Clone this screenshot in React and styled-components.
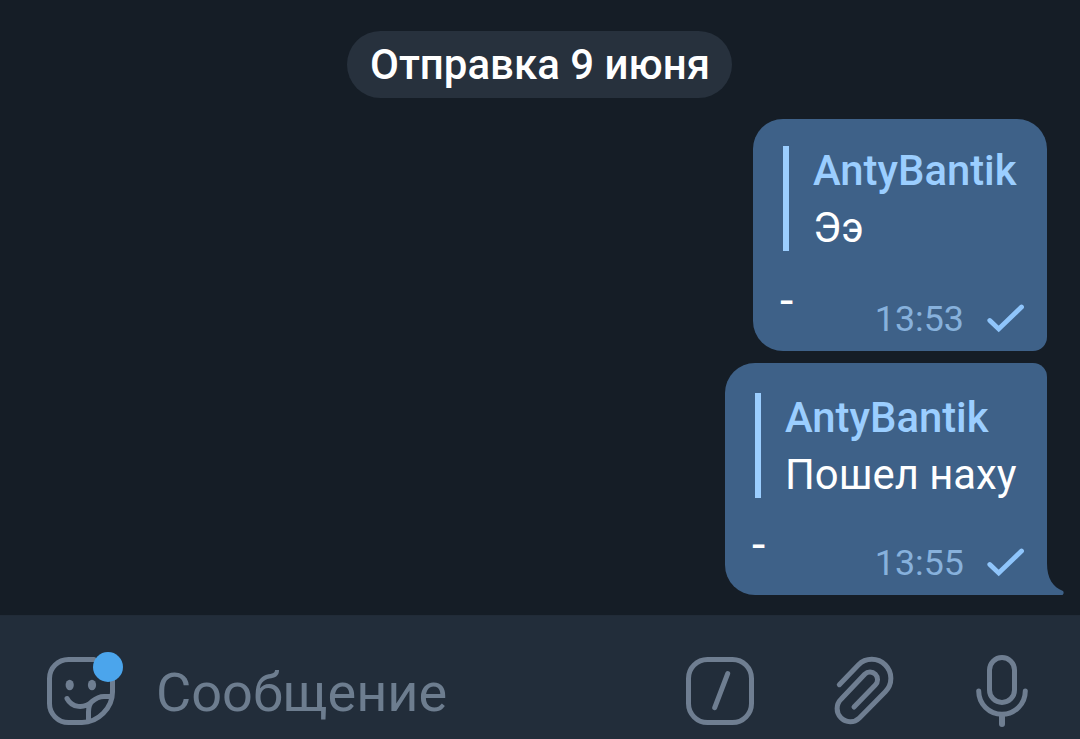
import React from 'react';
import styled, { createGlobalStyle } from 'styled-components';

const GlobalStyle = createGlobalStyle`
  * {
    box-sizing: border-box;
  }

  body {
    margin: 0;
    background: #151d26;
    font-family: Roboto, "Noto Sans", sans-serif;
  }
`

const Screen = styled.div`
  display: flex;
  flex-direction: column;
  width: 1080px;
  height: 739px;
  overflow: hidden;
`

const Chat = styled.main`
  display: flex;
  flex-direction: column;
  flex: none;
  height: 615px;
  padding: 31px 33px 0 0;
`

const DateChip = styled.div`
  align-self: center;
  width: 385px;
  height: 67px;
  margin: 0 0 21px 32px;
  padding-left: 1px;
  border-radius: 34px;
  background: #27313d;
  color: #fff;
  font-size: 42px;
  font-weight: 500;
  line-height: 68px;
  text-align: center;
  white-space: nowrap;
`

const Bubble = styled.article`
  position: relative;
  display: flex;
  flex-direction: column;
  align-self: flex-end;
  width: ${props => props.$last ? '322px' : '294px'};
  height: 232px;
  margin-bottom: 12px;
  padding: ${props => props.$last ? '30px' : '27px'} 23px 0 30px;
  border-radius: ${props => props.$last ? '30px 14px 0 30px' : '30px 30px 14px 30px'};
  background: #3e6188;
`

const Quote = styled.blockquote`
  height: 105px;
  margin: 0;
  padding-left: 24px;
  border-left: 6px solid #9bceff;
  font-size: 41.8px;
  line-height: 57px;
  white-space: nowrap;
`

const Author = styled.div`
  margin-top: -4px;
  color: #9bceff;
  font-weight: 500;
`

const QuoteText = styled.div`
  color: #fff;
`

const Body = styled.div`
  display: flex;
  justify-content: space-between;
  margin: ${props => props.$last ? '19px' : '22px'} 0 0 -3px;
`

const Message = styled.span`
  color: #fff;
  font-size: 48px;
  line-height: 56px;
`

const Meta = styled.div`
  display: flex;
  margin-top: 25px;
  color: #87b1dc;
  font-size: 35.8px;
  line-height: 42px;
`

const Check = styled.svg`
  width: 38px;
  height: 30px;
  margin: 6px 0 0 22px;
`

const Tail = styled.svg`
  position: absolute;
  left: 321px;
  bottom: 0;
  width: 18px;
  height: 36px;
`

const InputBar = styled.footer`
  display: flex;
  flex: none;
  align-items: flex-start;
  height: 124px;
  padding: 34px 46px 0 44px;
  border-top: 1px solid #212b37;
  background: #222d3a;
`

const Placeholder = styled.div`
  flex: 1;
  margin: 11px 0 0 32px;
  color: #6d7d8f;
  font-size: 54.1px;
  line-height: 64px;
`

const Icon = styled.svg`
  flex: none;
  width: 80px;
  height: 80px;
  margin-left: ${props => props.$gap || 0}px;
  fill: none;
  stroke: #6f7e91;
  stroke-width: 5;
  stroke-linecap: round;
  stroke-linejoin: round;
`

const messages = [
  { author: 'AntyBantik', quote: 'Ээ', text: '-', time: '13:53' },
  { author: 'AntyBantik', quote: 'Пошел наху', text: '-', time: '13:55' },
]

const StickerIcon = () => (
  <Icon viewBox="0 0 80 80">
    <path d="M50 9.5H24.5a19 19 0 0 0-19 19v25a19 19 0 0 0 19 19H38C54 72.5 68.5 58 68.5 42V20" />
    <path d="M23 48.5C28 58 40 59 48 51.5Q54 46.5 60 46.5H67M44.5 70V62Q44.5 55 48 51.5" />
    <g fill="#6f7e91" stroke="none">
      <ellipse cx="25.7" cy="35" rx="4.1" ry="5.3" />
      <ellipse cx="48" cy="35" rx="4.1" ry="5.3" />
    </g>
    <circle cx="64" cy="17" r="15" fill="#4ba5ec" stroke="none" />
  </Icon>
)

const CommandIcon = () => (
  <Icon viewBox="0 0 80 80">
    <rect x="8.5" y="9.5" width="63" height="63" rx="19" />
    <path d="M47.7 23.7L34.7 57.7" />
  </Icon>
)

const ClipIcon = () => (
  <Icon viewBox="0 0 80 80" $gap={70}>
    <path d="M9.3 34.7L28.3 14.9A19 19 0 0 1 55.3 41.8L29.4 67.9A13 13 0 0 1 11 49.3L34.7 24.3A7.4 7.4 0 0 1 45.3 35L24 57" />
  </Icon>
)

const MicIcon = () => (
  <Icon viewBox="0 0 80 80" $gap={44}>
    <rect x="35.5" y="7.5" width="25" height="45" rx="12.5" />
    <path d="M24.7 41a23.3 23.3 0 0 0 46.6 0" />
    <path d="M48 66V74" strokeWidth="6" />
  </Icon>
)

const ChatMessage = ({ message, last }) => (
  <Bubble $last={last}>
    <Quote>
      <Author>{message.author}</Author>
      <QuoteText>{message.quote}</QuoteText>
    </Quote>
    <Body $last={last}>
      <Message>{message.text}</Message>
      <Meta>
        {message.time}
        <Check viewBox="0 0 38 30" fill="none" stroke="#8fc5fb" strokeWidth="4.8" strokeLinecap="round">
          <path d="M3.8 16.5L12.7 25L35.5 3" />
        </Check>
      </Meta>
    </Body>
    {last && (
      <Tail viewBox="0 0 18 36" fill="#3e6188">
        <path d="M0 0H1V4C1 20 7 28 17 32Q18.5 34 16.5 36H0Z" />
      </Tail>
    )}
  </Bubble>
)

export default function App() {
  return (
    <Screen>
      <GlobalStyle />
      <Chat>
        <DateChip>Отправка 9 июня</DateChip>
        {messages.map((message, i) => (
          <ChatMessage key={message.time} message={message} last={i === messages.length - 1} />
        ))}
      </Chat>
      <InputBar>
        <StickerIcon />
        <Placeholder>Сообщение</Placeholder>
        <CommandIcon />
        <ClipIcon />
        <MicIcon />
      </InputBar>
    </Screen>
  );
}
